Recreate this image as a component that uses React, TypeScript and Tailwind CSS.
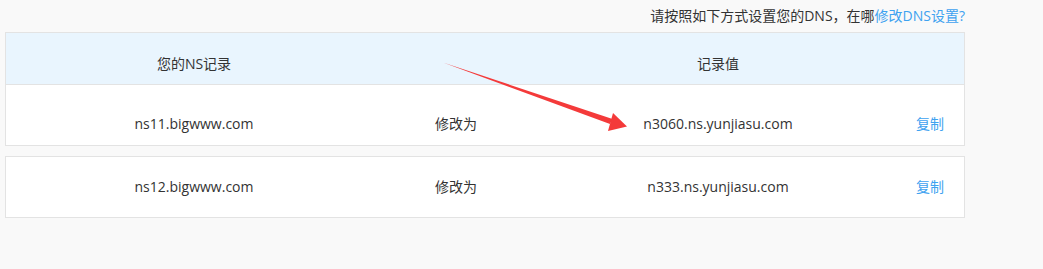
import React from "react";

const font = { fontFamily: '"Open Sans", "Noto Sans CJK SC", sans-serif' };

const rows = [
  { ns: "ns11.bigwww.com", value: "n3060.ns.yunjiasu.com" },
  { ns: "ns12.bigwww.com", value: "n333.ns.yunjiasu.com" },
];

const cols = "grid grid-cols-[376px_148px_376px_1fr]";

function Arrow() {
  return (
    <svg
      className="absolute left-0 top-0 pointer-events-none"
      width="1043"
      height="269"
      viewBox="0 0 1043 269"
    >
      <polygon points="443,62.5 612.5,119 610,124" fill="#f43a3a" />
      <polygon points="627,126.5 613,113 608,131" fill="#f43a3a" />
    </svg>
  );
}

export default function App() {
  return (
    <div
      className="relative w-full h-[269px] bg-[#f9f9f9] pl-[5px] text-[14px] text-[#333]"
      style={font}
    >
      <div className="w-[960px]">
        {/* Top hint */}
        <div className="h-[32px] flex items-center justify-end leading-[20px]">
          <span>请按照如下方式设置您的DNS，在哪</span>
          <a className="text-[#3ea2f0] cursor-pointer">修改DNS设置?</a>
        </div>

        {rows.map((row, i) => (
          <div
            key={row.ns}
            className={`border border-[#e3e3e3] bg-white ${i > 0 ? "mt-[10px]" : ""}`}
          >
            {i === 0 && (
              <div
                className={`${cols} h-[52px] pt-[21px] bg-[#e9f5fe] border-b border-[#e3e3e3] leading-[20px] text-center`}
              >
                <div>您的NS记录</div>
                <div />
                <div>记录值</div>
                <div />
              </div>
            )}
            <div
              className={`${cols} h-[60px] leading-[20px] text-center ${
                i === 0 ? "pt-[29px]" : "pt-[20px]"
              }`}
            >
              <div>{row.ns}</div>
              <div>修改为</div>
              <div>{row.value}</div>
              <div className="pr-[10px] text-[#3ea2f0] cursor-pointer">复制</div>
            </div>
          </div>
        ))}
      </div>
      <Arrow />
    </div>
  );
}
